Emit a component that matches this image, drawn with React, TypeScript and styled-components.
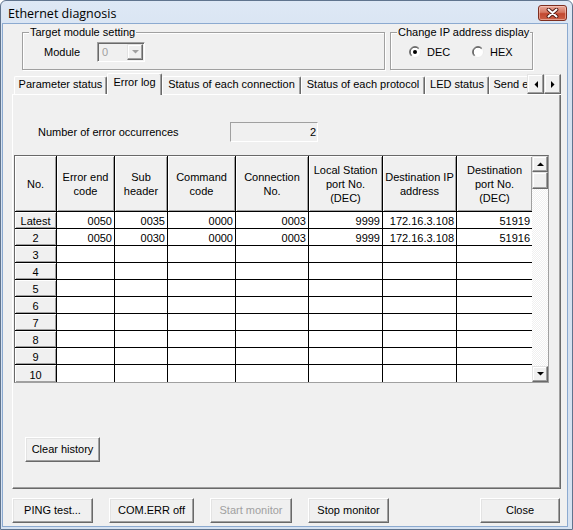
import React, { FC } from "react"
import styled, { createGlobalStyle } from "styled-components"

interface TabInfo {
  label: string
  width: number
  active?: boolean
}

interface RowData {
  no: string
  values: string[]
}

const GlobalStyle = createGlobalStyle`
  html, body {
    margin: 0;
    padding: 0;
    background: rgb(255, 255, 255);
  }
  body {
    font-family: "Liberation Sans", Arial, sans-serif;
    font-size: 11px;
    color: rgb(0, 0, 0);
  }
  * {
    box-sizing: border-box;
  }
`

const Window = styled.div`
  width: 573px;
  height: 530px;
  display: flex;
  flex-direction: column;
  background: linear-gradient(rgb(222, 232, 245), rgb(212, 225, 240) 60px, rgb(214, 226, 241));
  border: 1px solid rgb(96, 116, 142);
  border-radius: 6px 6px 0 0;
`

const TitleBar = styled.div`
  height: 23px;
  display: flex;
  justify-content: space-between;
  align-items: flex-start;
  padding: 0 5px 0 7px;
`

const Title = styled.div`
  margin-top: 4px;
  font-family: "Open Sans", "Noto Sans", sans-serif;
  font-size: 12.5px;
  line-height: 17px;
  color: rgb(0, 0, 0);
`

const CloseButton = styled.div`
  margin-top: 4px;
  width: 29px;
  height: 16px;
  display: flex;
  align-items: center;
  justify-content: center;
  border: 1px solid rgb(126, 46, 32);
  border-radius: 3px;
  background: linear-gradient(rgb(232, 168, 154), rgb(214, 120, 98) 45%, rgb(194, 72, 48) 55%, rgb(204, 96, 70));
  box-shadow: inset 0 0 0 1px rgba(255, 220, 210, 0.5);
`

const Client = styled.div`
  flex: 1;
  margin: 0 5px 3px 2px;
  display: flex;
  flex-direction: column;
  padding: 2px 6px 3px 9px;
  background: rgb(240, 240, 240);
  box-shadow: 0 0 0 1px rgb(140, 170, 208);
`

const TopRow = styled.div`
  height: 44px;
  display: flex;
  gap: 5px;
  padding-left: 10px;
`

const GroupBox = styled.fieldset<{ $width: number }>`
  width: ${p => p.$width}px;
  height: 44px;
  margin: 0;
  padding: 0;
  min-width: 0;
  border: 1px solid rgb(160, 160, 160);
  box-shadow: inset 1px 1px 0 rgb(255, 255, 255), 1px 1px 0 rgb(255, 255, 255);
`

const Legend = styled.legend`
  margin-left: 6px;
  padding: 0 1px;
  line-height: 13px;
  background: rgb(240, 240, 240);
`

const GroupBody = styled.div<{ $pad: number }>`
  height: 26px;
  display: flex;
  align-items: center;
  padding-left: ${p => p.$pad}px;
`

const FieldLabel = styled.span`
  width: 53px;
`

const Combo = styled.div`
  width: 48px;
  height: 20px;
  display: flex;
  align-items: center;
  justify-content: space-between;
  padding: 1px;
  border: 1px solid;
  border-color: rgb(160, 160, 160) rgb(255, 255, 255) rgb(255, 255, 255) rgb(160, 160, 160);
  box-shadow: inset 1px 1px 0 rgb(105, 105, 105);
  color: rgb(160, 160, 160);
`

const ComboText = styled.span`
  padding-left: 3px;
`

const ComboArrow = styled.div`
  width: 16px;
  height: 16px;
  display: flex;
  align-items: center;
  justify-content: center;
  border: 1px solid;
  border-color: rgb(227, 227, 227) rgb(105, 105, 105) rgb(105, 105, 105) rgb(227, 227, 227);
  box-shadow: inset -1px -1px 0 rgb(160, 160, 160), inset 1px 1px 0 rgb(255, 255, 255);
`

const RadioOption = styled.label<{ $width: number }>`
  width: ${p => p.$width}px;
  display: flex;
  align-items: center;
  gap: 6px;
`

const TabStrip = styled.div`
  margin-top: 2px;
  height: 23px;
  display: flex;
  align-items: flex-end;
  background: linear-gradient(to top, rgb(255, 255, 255) 1px, transparent 1px);
`

const TabList = styled.div`
  flex: 1;
  height: 100%;
  display: flex;
  align-items: flex-end;
  overflow: hidden;
  padding-left: 2px;
`

const Tab = styled.div<{ $width: number; $active?: boolean }>`
  flex: none;
  position: relative;
  z-index: ${p => (p.$active ? 1 : 0)};
  width: ${p => p.$width}px;
  height: ${p => (p.$active ? 22 : 18)}px;
  margin-bottom: ${p => (p.$active ? 0 : 1)}px;
  padding-bottom: ${p => (p.$active ? 5 : 3)}px;
  display: flex;
  align-items: center;
  justify-content: center;
  white-space: nowrap;
  background: rgb(240, 240, 240);
  border-top: 1px solid rgb(255, 255, 255);
  border-left: 1px solid rgb(255, 255, 255);
  border-right: 1px solid rgb(105, 105, 105);
  border-radius: 2px 2px 0 0;
  box-shadow: inset -1px 0 0 rgb(160, 160, 160);
`

const TabScroll = styled.div`
  display: flex;
  margin-bottom: 1px;
`

const ArrowButton = styled.div<{ $w: number; $h: number }>`
  width: ${p => p.$w}px;
  height: ${p => p.$h}px;
  display: flex;
  align-items: center;
  justify-content: center;
  background: rgb(240, 240, 240);
  border: 1px solid;
  border-color: rgb(227, 227, 227) rgb(105, 105, 105) rgb(105, 105, 105) rgb(227, 227, 227);
  box-shadow: inset -1px -1px 0 rgb(160, 160, 160), inset 1px 1px 0 rgb(255, 255, 255);
`

const Panel = styled.div`
  flex: 1;
  display: flex;
  flex-direction: column;
  border-left: 1px solid rgb(255, 255, 255);
  border-right: 1px solid rgb(105, 105, 105);
  border-bottom: 1px solid rgb(105, 105, 105);
  box-shadow: inset -1px -1px 0 rgb(160, 160, 160);
`

const CountRow = styled.div`
  margin-top: 27px;
  height: 20px;
  display: flex;
  align-items: center;
  padding-left: 25px;
`

const CountLabel = styled.span`
  width: 192px;
`

const CountBox = styled.div`
  width: 88px;
  height: 20px;
  padding-right: 1px;
  text-align: right;
  line-height: 18px;
  border: 1px solid;
  border-color: rgb(160, 160, 160) rgb(255, 255, 255) rgb(255, 255, 255) rgb(160, 160, 160);
`

const GridBox = styled.div`
  margin: 13px 0 0 1px;
  width: 535px;
  display: flex;
  border: 1px solid;
  border-color: rgb(105, 105, 105) rgb(160, 160, 160) rgb(160, 160, 160) rgb(105, 105, 105);
`

const Table = styled.div`
  display: grid;
  grid-template-columns: 42px 58px 53px 68px 73px 74px 74px 75px;
  grid-template-rows: 56px repeat(10, 17px);
`

const HeadCell = styled.div<{ $lastCol?: boolean; $lastRow?: boolean; $row?: boolean }>`
  display: flex;
  align-items: center;
  justify-content: center;
  padding-top: ${p => (p.$row ? 2 : 0)}px;
  text-align: center;
  white-space: pre-line;
  line-height: 14px;
  background: rgb(240, 240, 240);
  border-right: ${p => (p.$lastCol ? "none" : "1px solid rgb(0, 0, 0)")};
  border-bottom: ${p => (p.$lastRow ? "none" : "1px solid rgb(0, 0, 0)")};
  box-shadow: inset 1px 1px 0 rgb(255, 255, 255), inset -1px -1px 0 rgb(160, 160, 160);
`

const DataCell = styled.div<{ $lastCol?: boolean; $lastRow?: boolean }>`
  padding: 1px 2px 0 0;
  text-align: right;
  line-height: 16px;
  background: rgb(255, 255, 255);
  border-right: ${p => (p.$lastCol ? "none" : "1px solid rgb(0, 0, 0)")};
  border-bottom: ${p => (p.$lastRow ? "none" : "1px solid rgb(0, 0, 0)")};
`

const VScroll = styled.div`
  width: 16px;
  display: flex;
  flex-direction: column;
  background: repeating-conic-gradient(rgb(240, 240, 240) 0 25%, rgb(255, 255, 255) 0 50%) 0 0 / 2px 2px;
`

const ScrollFill = styled.div`
  flex: 1;
`

const ClearButtonRow = styled.div`
  margin: 54px 0 0 12px;
`

const Button = styled.button<{ $width: number }>`
  width: ${p => p.$width}px;
  height: 25px;
  padding: 0 0 1px;
  font-family: "Liberation Sans", Arial, sans-serif;
  font-size: 11px;
  color: rgb(0, 0, 0);
  background: rgb(240, 240, 240);
  border: 1px solid;
  border-color: rgb(255, 255, 255) rgb(105, 105, 105) rgb(105, 105, 105) rgb(255, 255, 255);
  box-shadow: inset -1px -1px 0 rgb(160, 160, 160), inset 1px 1px 0 rgb(227, 227, 227);
  &:disabled {
    color: rgb(160, 160, 160);
  }
`

const ButtonRow = styled.div`
  margin-top: 9px;
  display: flex;
  gap: 16px;
  padding-right: 1px;
`

const Push = styled.div`
  flex: 1;
`

const tabs: TabInfo[] = [
  { label: "Parameter status", width: 93 },
  { label: "Error log", width: 55, active: true },
  { label: "Status of each connection", width: 139 },
  { label: "Status of each protocol", width: 124 },
  { label: "LED status", width: 64 },
  { label: "Send e-mail status", width: 100 }
]

const headers = [
  "No.",
  "Error end\ncode",
  "Sub\nheader",
  "Command\ncode",
  "Connection\nNo.",
  "Local Station\nport No.\n(DEC)",
  "Destination IP\naddress",
  "Destination\nport No.\n(DEC)"
]

const rows: RowData[] = [
  { no: "Latest", values: ["0050", "0035", "0000", "0003", "9999", "172.16.3.108", "51919"] },
  { no: "2", values: ["0050", "0030", "0000", "0003", "9999", "172.16.3.108", "51916"] },
  ...["3", "4", "5", "6", "7", "8", "9", "10"].map(no => ({ no, values: ["", "", "", "", "", "", ""] }))
]

const Triangle: FC<{ dir: "up" | "down" | "left" | "right"; color?: string }> = ({ dir, color = "rgb(0, 0, 0)" }) => {
  const points = {
    up: "0,4 7,4 3.5,0.5",
    down: "0,0 7,0 3.5,3.5",
    left: "4,0 4,7 0.5,3.5",
    right: "0,0 0,7 3.5,3.5"
  }[dir]
  const vertical = dir === "up" || dir === "down"
  return (
    <svg width={vertical ? 7 : 4} height={vertical ? 4 : 7} viewBox={vertical ? "0 0 7 4" : "0 0 4 7"}>
      <polygon points={points} fill={color} />
    </svg>
  )
}

const RadioMark: FC<{ checked?: boolean }> = ({ checked }) => (
  <svg width="12" height="12" viewBox="0 0 12 12">
    <defs>
      <linearGradient id="radioEdge" x1="0" y1="0" x2="1" y2="1">
        <stop offset="0.5" stopColor="rgb(128, 128, 128)" />
        <stop offset="0.5" stopColor="rgb(235, 235, 235)" />
      </linearGradient>
    </defs>
    <circle cx="6" cy="6" r="5.5" fill="rgb(255, 255, 255)" stroke="url(#radioEdge)" />
    <path d="M2.6 9.4 A4.6 4.6 0 0 1 9.4 2.6" fill="none" stroke="rgb(64, 64, 64)" strokeWidth="0.9" />
    {checked && <circle cx="6" cy="6" r="2" fill="rgb(0, 0, 0)" />}
  </svg>
)

const CloseGlyph: FC = () => (
  <svg width="13" height="10" viewBox="0 0 13 10">
    <path d="M2.5 1.5 L10.5 8.5 M10.5 1.5 L2.5 8.5" stroke="rgb(80, 24, 16)" strokeWidth="3.8" strokeLinecap="round" />
    <path d="M2.5 1.5 L10.5 8.5 M10.5 1.5 L2.5 8.5" stroke="rgb(255, 255, 255)" strokeWidth="2" strokeLinecap="round" />
  </svg>
)

const App: FC = () => {
  return (
    <>
      <GlobalStyle />
      <Window>
        <TitleBar>
          <Title>Ethernet diagnosis</Title>
          <CloseButton>
            <CloseGlyph />
          </CloseButton>
        </TitleBar>
        <Client>
          <TopRow>
            <GroupBox $width={363}>
              <Legend>Target module setting</Legend>
              <GroupBody $pad={21}>
                <FieldLabel>Module</FieldLabel>
                <Combo>
                  <ComboText>0</ComboText>
                  <ComboArrow>
                    <Triangle dir="down" color="rgb(160, 160, 160)" />
                  </ComboArrow>
                </Combo>
              </GroupBody>
            </GroupBox>
            <GroupBox $width={143}>
              <Legend>Change IP address display</Legend>
              <GroupBody $pad={18}>
                <RadioOption $width={63}>
                  <RadioMark checked />
                  DEC
                </RadioOption>
                <RadioOption $width={50}>
                  <RadioMark />
                  HEX
                </RadioOption>
              </GroupBody>
            </GroupBox>
          </TopRow>

          <TabStrip>
            <TabList>
              {tabs.map(t => (
                <Tab key={t.label} $width={t.width} $active={t.active}>
                  {t.label}
                </Tab>
              ))}
            </TabList>
            <TabScroll>
              <ArrowButton $w={17} $h={20}>
                <Triangle dir="left" />
              </ArrowButton>
              <ArrowButton $w={17} $h={20}>
                <Triangle dir="right" />
              </ArrowButton>
            </TabScroll>
          </TabStrip>

          <Panel>
            <CountRow>
              <CountLabel>Number of error occurrences</CountLabel>
              <CountBox>2</CountBox>
            </CountRow>

            <GridBox>
              <Table>
                {headers.map((h, i) => (
                  <HeadCell key={h} $lastCol={i === headers.length - 1}>
                    {h}
                  </HeadCell>
                ))}
                {rows.map((r, ri) => (
                  <React.Fragment key={r.no}>
                    <HeadCell $row $lastRow={ri === rows.length - 1}>
                      {r.no}
                    </HeadCell>
                    {r.values.map((v, ci) => (
                      <DataCell
                        key={ci}
                        $lastCol={ci === r.values.length - 1}
                        $lastRow={ri === rows.length - 1}
                      >
                        {v}
                      </DataCell>
                    ))}
                  </React.Fragment>
                ))}
              </Table>
              <VScroll>
                <ArrowButton $w={16} $h={16}>
                  <Triangle dir="up" />
                </ArrowButton>
                <ArrowButton $w={16} $h={17} />
                <ScrollFill />
                <ArrowButton $w={16} $h={16}>
                  <Triangle dir="down" />
                </ArrowButton>
              </VScroll>
            </GridBox>

            <ClearButtonRow>
              <Button $width={75}>Clear history</Button>
            </ClearButtonRow>
          </Panel>

          <ButtonRow>
            <Button $width={81}>PING test...</Button>
            <Button $width={85}>COM.ERR off</Button>
            <Button $width={82} disabled>
              Start monitor
            </Button>
            <Button $width={81}>Stop monitor</Button>
            <Push />
            <Button $width={80}>Close</Button>
          </ButtonRow>
        </Client>
      </Window>
    </>
  )
}

export default App
